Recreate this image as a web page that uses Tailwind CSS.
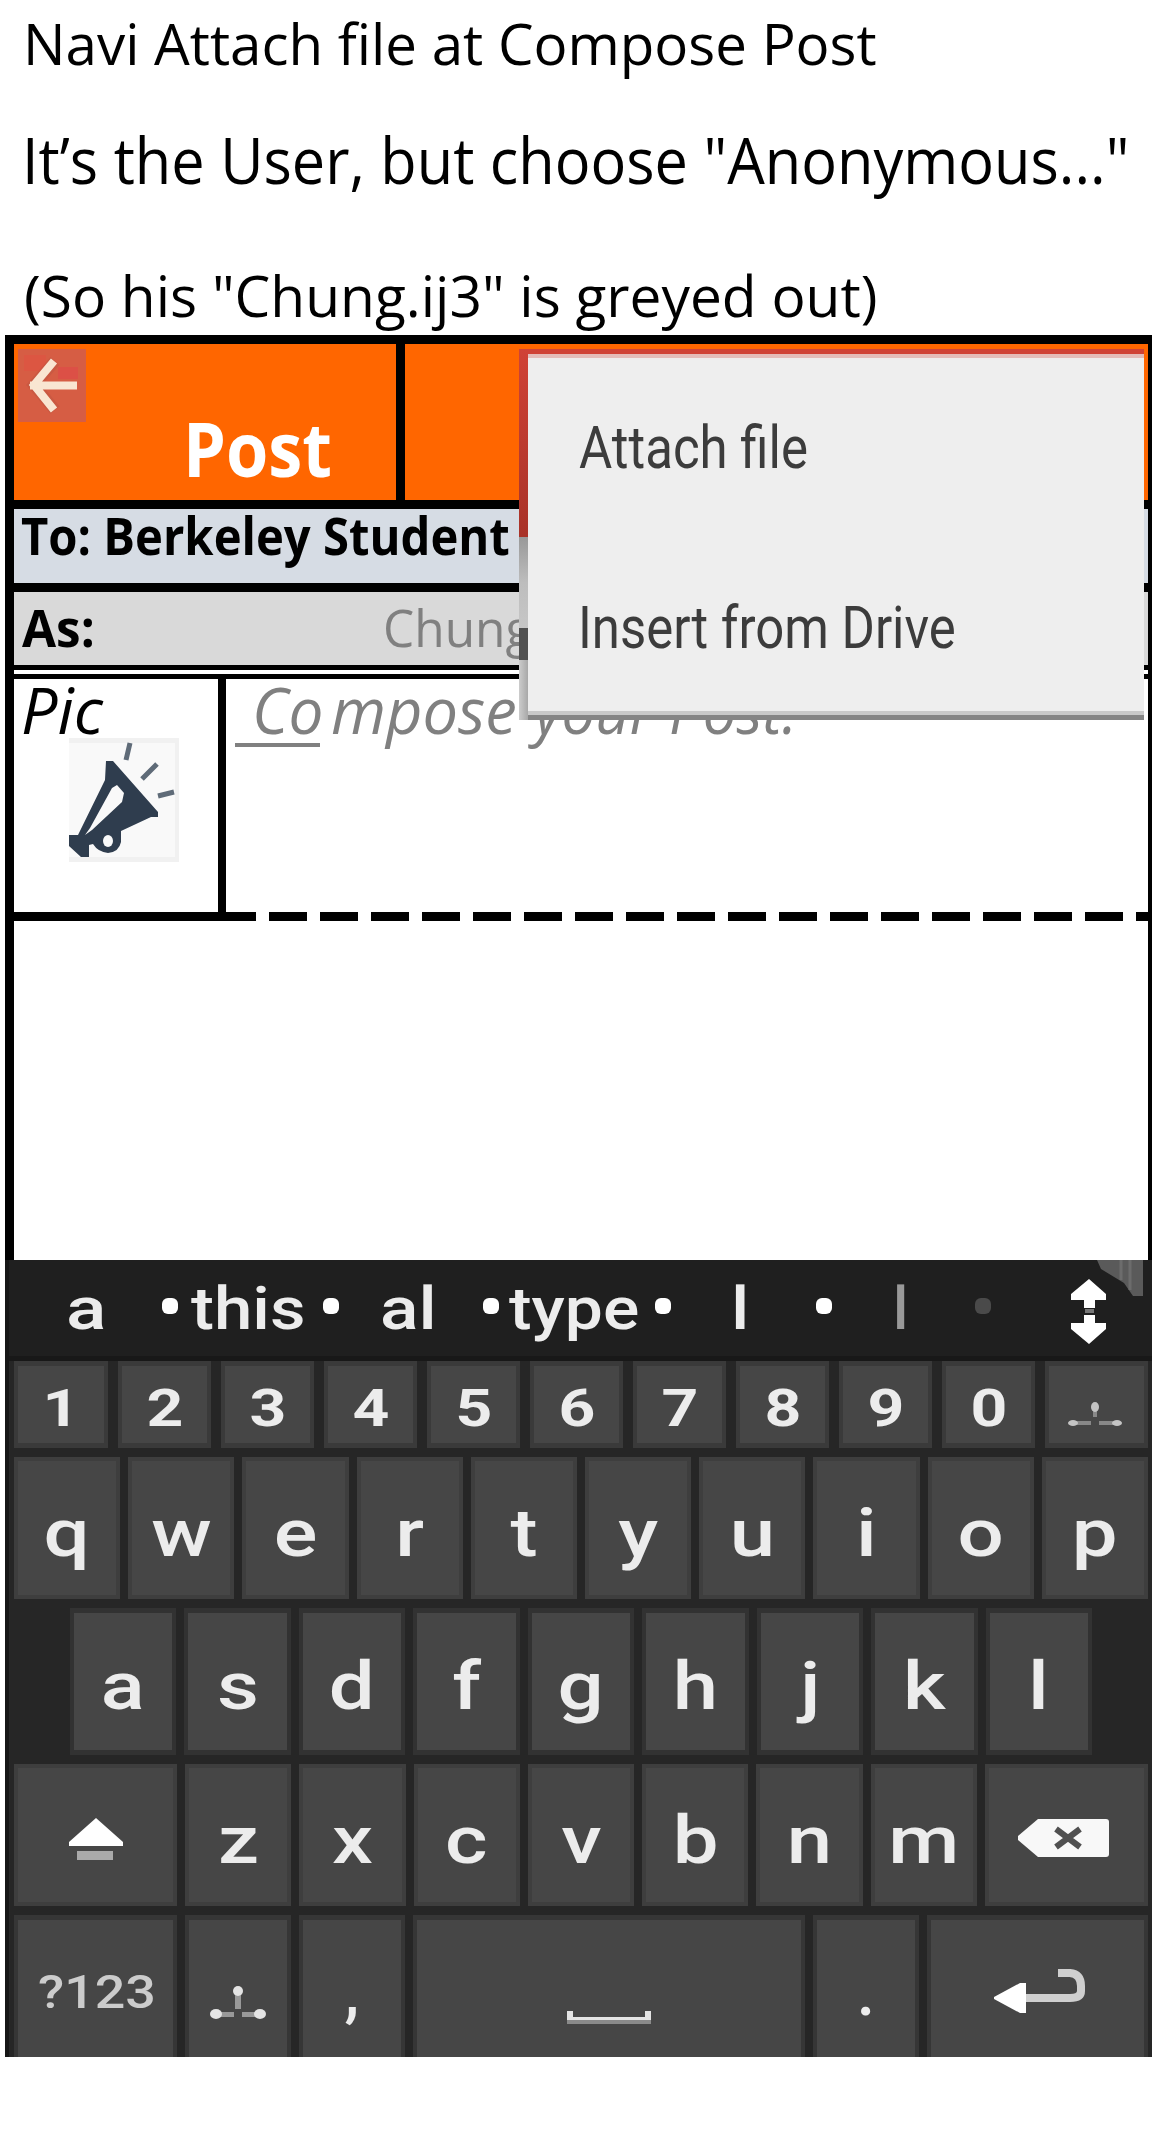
<!DOCTYPE html>
<html lang="en">
<head>
<meta charset="utf-8">
<title>Compose Post</title>
<script src="https://cdn.jsdelivr.net/npm/@tailwindcss/browser@4"></script>
</head>
<body class="bg-white">
<div class="relative h-[2144px] w-[1152px] overflow-hidden font-['Open_Sans',sans-serif] whitespace-nowrap text-black">

  <!-- Notes above the mockup -->
  <header>
    <p class="h-[86px] pl-[23px] text-[57px] leading-[86px]"><span class="inline-block origin-left scale-x-[0.991]">Navi Attach file at Compose Post</span></p>
    <p class="h-[157px] pl-[22px] text-[64px] leading-[148px]"><span class="inline-block origin-left scale-x-[0.929]">It’s the User, but choose "Anonymous..."</span></p>
    <p class="h-[92px] pl-[24px] text-[57px] leading-[104px]"><span class="inline-block origin-left scale-x-[0.997]">(So his "Chung.ij3" is greyed out)</span></p>
  </header>

  <main class="ml-[5px] h-[925px] border-l-9 border-r-4 border-t-9 border-black">
    <div class="flex h-[156px] bg-[#ff6600]">
      <div class="relative w-[391px] border-r-9 border-black pl-[169px] text-[76px] leading-[207px] font-bold text-white">
        <svg class="absolute left-1 top-[5px]" width="68" height="73" viewBox="0 0 68 73">
          <rect width="68" height="73" fill="#d65d44"/>
          <rect x="6" y="6" width="22" height="16" fill="#e2503f" opacity=".5"/>
          <rect x="40" y="18" width="20" height="12" fill="#e04848" opacity=".6"/>
          <path d="M37 12L16 36L37 61" fill="none" stroke="#b4543f" stroke-width="12" opacity=".35"/>
          <path d="M36 12L16 36L36 61M12 36.500H59" fill="none" stroke="#f9e6d2" stroke-width="8"/>
        </svg>
        <span class="inline-block origin-left scale-x-[0.9]">Post</span>
      </div>
    </div>
    <div class="h-[83px] border-t-9 border-black bg-[#d6dce4] pl-[7px] text-[52px] leading-[52px] font-bold"><span class="inline-block origin-left scale-x-[0.908]">To: Berkeley Student</span></div>
    <div class="flex h-[82px] border-t-9 border-black bg-[#d9d9d9] pl-[8px] text-[52px] leading-[70px]">
      <span class="w-[361px] font-bold"><span class="inline-block origin-left scale-x-[0.95]">As:</span></span>
      <span class="text-[#808080]"><span class="inline-block origin-left scale-x-[0.954]">Chung.ij3</span></span>
    </div>
    <div class="h-[14px] border-y-5 border-black bg-white"></div>
    <div class="flex h-[233px] text-[64px] leading-[60px] italic">
      <div class="w-[212px] border-r-8 border-black pl-[7px]">
        <span class="block origin-left scale-x-[1.008] pt-px">Pic</span>
        <svg class="-mt-[2px] ml-[48px]" width="110" height="124" viewBox="0 0 110 124">
          <rect width="110" height="124" fill="#f1f1f1"/>
          <rect y="5" width="106" height="114" fill="#f9f9f9"/>
          <path fill-rule="evenodd" fill="#2f3d4e" d="M37 23L44 23L89 74V79H82L52 93V104Q50 114 39 115Q29 114 24 106L20 107V119H12L0 108V97H9L36 42ZM48 47L43 50L21 90L16 97L23 92L53 64L55 55Z"/>
          <ellipse cx="39" cy="103" rx="5" ry="6" fill="#f9f9f9"/>
          <path d="M61 5L57 22M88 26L73 41M105 54L89 58" stroke="#5f6b78" stroke-width="5" fill="none"/>
        </svg>
      </div>
      <div class="flex text-[#808080]">
        <span class="ml-[9px] h-[68px] w-[85px] border-b-4 border-[#808080] pl-[17px] pt-px"><span class="inline-block origin-left scale-x-[0.97]">Co</span></span>
        <span class="ml-[11px] w-[203px] pt-px"><span class="inline-block origin-left scale-x-[0.987]">mpose</span></span>
        <span class="inline-block origin-left scale-x-[0.935] pt-px">your Post.</span>
      </div>
    </div>
    <div class="flex h-[9px]">
      <div class="w-[242px] bg-black"></div>
      <div class="flex-1 bg-[repeating-linear-gradient(90deg,white_0px,white_13px,black_13px,black_51px)]"></div>
    </div>
  </main>

  <section class="ml-[5px] h-[797px] border-l-4 border-[#161616] bg-[#262626] font-[Roboto,sans-serif] font-medium text-[#ececec]">
    <!-- Suggestions -->
    <div class="relative grid h-[101px] grid-cols-[95px_30px_131px_58px_102px_27px_145px_77px_84px_78px_81px_94px_84px] border-b-5 border-[#181818] bg-[#1f1f1f] pl-[57px] text-[60px] leading-[97px]">
      <span class="inline-block origin-left scale-x-[1.25]">a</span>
      <i class="mt-[38px] ml-px size-4 rounded-md bg-white"></i>
      <span class="w-0"><span class="inline-block origin-left scale-x-[1.15]">this</span></span>
      <i class="mt-[38px] ml-px size-4 rounded-md bg-white"></i>
      <span class="w-0"><span class="inline-block origin-left scale-x-[1.19]">al</span></span>
      <i class="mt-[38px] ml-px size-4 rounded-md bg-white"></i>
      <span class="w-0"><span class="inline-block origin-left scale-x-[1.13]">type</span></span>
      <i class="mt-[38px] ml-px size-4 rounded-md bg-white"></i>
      <span class="w-0"><span class="inline-block origin-left scale-x-[1.2]">l</span></span>
      <i class="mt-[38px] ml-px size-4 rounded-md bg-white"></i>
      <span class="w-0 text-[#999999]">l</span>
      <i class="mt-[38px] ml-px size-4 rounded-md bg-[#4a4a4a]"></i>
      <svg class="mt-[19px] ml-[2px]" width="38" height="65" viewBox="0 0 38 65" fill="white"><path d="M19 0L36 15V21H25V29H14V21H1V15ZM14 36H25V44H36V50L19 65L1 50V44H14Z"/><path d="M15 30H24V34H15Z" fill="#777"/></svg>
      <svg class="absolute top-0 right-[9px]" width="46" height="36" viewBox="0 0 46 36"><path d="M0 0H46V36H36L27 23L4 9Z" fill="#5a5a5a"/><path d="M24 0V20M33 0V30" stroke="#6c6c6c" stroke-width="3"/></svg>
    </div>

    <div class="pl-[5px] pr-1">
      <div id="digits" class="grid h-[96px] grid-cols-[94px_repeat(9,93px)_103px] gap-[10px]"></div>
      <div id="row1" class="flex h-[151px] gap-2"></div>
      <div id="row2" class="flex h-[156px] gap-2 px-[56px]"></div>
      <div class="flex h-[151px] gap-2">
        <div class="flex h-[142px] w-[163px] justify-center border-4 border-[#3e3e3e] bg-[#464646] pt-[50px]"><svg width="54" height="42" viewBox="0 0 54 42"><path d="M27 0L54 24V28H0V24Z" fill="white"/><path d="M8 33H44V42H8Z" fill="#aaa"/></svg></div>
        <div id="row3" class="flex flex-1 gap-2"></div>
        <div class="flex h-[142px] w-[163px] justify-center border-4 border-[#3e3e3e] bg-[#464646] pt-[51px] pr-[5px]"><svg width="92" height="38" viewBox="0 0 92 38"><path d="M0 17L20 0H88Q91 0 91 3V35Q91 38 88 38H20L0 21Z" fill="#f8f8f8"/><path d="M38 10L62 28M62 10L38 28" stroke="#505050" stroke-width="6"/></svg></div>
      </div>
      <div class="flex h-[142px] gap-2">
        <div class="w-[163px] border-x-4 border-t-5 border-[#363636] bg-[#464646] pl-[20px] text-[46px] leading-[144px] text-[#cccccc]"><span class="inline-block origin-left scale-x-[1.17]">?123</span></div>
        <div class="flex w-[106px] justify-center border-x-4 border-t-5 border-[#363636] bg-[#464646] pt-[65px] pr-px"><svg width="60" height="38" viewBox="0 0 60 38" fill="#e4e4e4"><path d="M27 10H33V24H27ZM8 27H26V32H8ZM34 27H52V32H34Z" fill="#999"/><ellipse cx="30" cy="6" rx="5" ry="5"/><ellipse cx="8" cy="29" rx="6" ry="5"/><ellipse cx="52" cy="29" rx="6" ry="5"/></svg></div>
        <div class="w-[106px] border-x-4 border-t-5 border-[#363636] bg-[#464646] text-center text-[66px] leading-[146px]">,</div>
        <div class="flex w-[392px] justify-center border-x-4 border-t-5 border-[#363636] bg-[#464646] pt-[91px]"><svg width="84" height="14" viewBox="0 0 84 14"><path d="M3 0V9H81V0" fill="none" stroke="#e4e4e4" stroke-width="6"/><path d="M0 9H84V13H0Z" fill="#8a8a8a"/></svg></div>
        <div class="w-[106px] border-x-4 border-t-5 border-[#363636] bg-[#464646] text-center text-[66px] leading-[146px]">.</div>
        <div class="flex flex-1 border-x-4 border-t-5 border-[#363636] bg-[#464646] pt-[47px] pl-[63px]"><svg width="94" height="50" viewBox="0 0 94 50"><path d="M64 6H76Q87 7 87 19V24Q87 31 76 31H32" fill="none" stroke="#cfcfcf" stroke-width="8"/><path d="M0 30L26 16H32V46H26L0 32Z" fill="white"/></svg></div>
      </div>
    </div>
  </section>

  <!-- Attachment menu -->
  <div class="absolute top-[349px] left-[519px] flex h-[371px] w-[625px]">
    <div class="w-[9px]">
      <div class="h-[188px] bg-linear-to-b from-[#d04236] to-[#a83228]"></div>
      <div class="h-[91px] bg-linear-to-b from-[#999999] via-[#bdbdbd] to-[#c6c6c6]"></div>
      <div class="h-8 bg-[#505050]"></div>
      <div class="h-[60px] bg-linear-to-r from-[#cccccc] to-[#a8a8a8]"></div>
    </div>
    <div class="flex-1 border-t-5 border-[#cf4236] bg-[#eeeeee] font-[Roboto,sans-serif] text-[59px] leading-[187px] text-[#3c3c3c]">
      <div class="h-[180px] border-t-4 border-[#e4bcb9] pl-[51px] leading-[179px]"><span class="inline-block origin-left scale-x-[0.864]">Attach file</span></div>
      <div class="h-[177px] pl-[50px]"><span class="inline-block origin-left scale-x-[0.862]">Insert from Drive</span></div>
      <div class="h-1 bg-[#c9c9c9]"></div>
      <div class="h-[5px] bg-[#858585]"></div>
    </div>
  </div>
</div>
<script>
const fill = (id, chars, cls) => {
  document.getElementById(id).innerHTML = [...chars].map(c => `<div class="${cls}"><span class="inline-block scale-x-[1.235]">${c}</span></div>`).join('');
};
fill('digits', '1234567890', 'h-[87px] border-x-4 border-t-5 border-b-5 border-[#3a3a3a] bg-[#464646] text-center text-[52px] leading-[85px] font-bold');
const letterKey = 'h-[142px] flex-1 border-4 border-[#3e3e3e] bg-[#464646] text-center text-[66px] leading-[145px]';
fill('row1', 'qwertyuiop', letterKey);
fill('row2', 'asdfghjkl', 'h-[147px] flex-1 border-x-4 border-y-5 border-[#323232] bg-[#464646] text-center text-[66px] leading-[147px]');
fill('row3', 'zxcvbnm', letterKey);
document.getElementById('digits').insertAdjacentHTML('beforeend', '<div class="flex h-[87px] justify-center border-x-4 border-y-5 border-[#3a3a3a] bg-[#464646] pt-[34px] pr-[3px]"><svg width="56" height="28" viewBox="0 0 56 28" fill="#c4c4c4"><path d="M6 21H24V25H6ZM32 21H50V25H32ZM26 8H30V17H26Z" fill="#888"/><ellipse cx="28" cy="7" rx="4" ry="5"/><ellipse cx="6" cy="23" rx="5" ry="3"/><ellipse cx="50" cy="23" rx="5" ry="3"/></svg></div>');
</script>
</body>
</html>
